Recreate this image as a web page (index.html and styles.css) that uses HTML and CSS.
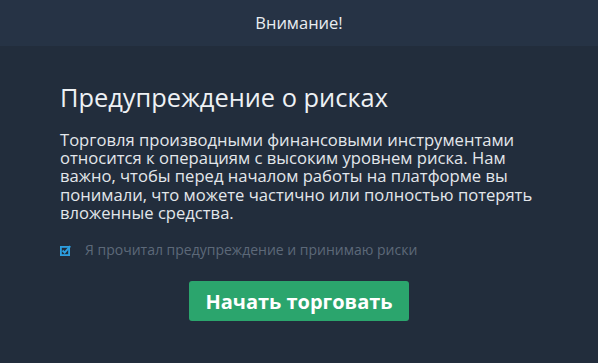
FILE: index.html
```html
<!DOCTYPE html>
<html lang="ru">
<head>
<meta charset="utf-8">
<link rel="stylesheet" href="styles.css">
</head>
<body>
<div class="modal">
  <div class="modal-header">Внимание!</div>
  <div class="modal-body">
    <h1 class="title">Предупреждение о рисках</h1>
    <p class="text">Торговля производными финансовыми инструментами относится к операциям с высоким уровнем риска. Нам важно, чтобы перед началом работы на платформе вы понимали, что можете частично или полностью потерять вложенные средства.</p>
    <label class="check">
      <svg class="check-icon" width="11" height="11" viewBox="0 0 11 11">
        <rect x="0.9" y="1.9" width="8.2" height="8.2" fill="none" stroke="#2d9fe0" stroke-width="1.8"/>
        <path d="M2.6 5.5 L4.7 7.6 L10.2 1.2" fill="none" stroke="#2d9fe0" stroke-width="2"/>
      </svg>
      <span class="check-label">Я прочитал предупреждение и принимаю риски</span>
    </label>
    <div class="actions">
      <button class="btn">Начать торговать</button>
    </div>
  </div>
</div>
</body>
</html>
```

FILE: styles.css
```css
html, body {
  margin: 0;
  padding: 0;
  background: #222d3c;
  font-family: "Open Sans", "Liberation Sans", sans-serif;
}
.modal {
  width: 598px;
  height: 363px;
  background: #222d3c;
}
.modal-header {
  height: 46px;
  background: #263345;
  color: #e9edf1;
  font-size: 16.5px;
  line-height: 46px;
  text-align: center;
}
.modal-body {
  padding: 34px 60px 0 60px;
}
.title {
  margin: 0;
  font-size: 25.4px;
  font-weight: 400;
  line-height: 34px;
  color: #eef1f4;
}
.text {
  margin: 17px 0 0;
  font-size: 16.6px;
  line-height: 18.2px;
  color: #e3e7eb;
}
.check {
  display: flex;
  align-items: center;
  gap: 14px;
  margin-top: 19px;
  height: 18px;
}
.check-icon {
  display: block;
  flex: none;
}
.check-label {
  font-size: 14px;
  line-height: 18px;
  color: #5d6979;
}
.actions {
  display: flex;
  justify-content: center;
  margin-top: 22px;
}
.btn {
  width: 220px;
  height: 40px;
  border: 0;
  border-radius: 3px;
  background: #2ba56d;
  color: #ffffff;
  font-family: "Open Sans", "Liberation Sans", sans-serif;
  font-size: 20px;
  font-weight: 700;
  padding: 0;
}
```
